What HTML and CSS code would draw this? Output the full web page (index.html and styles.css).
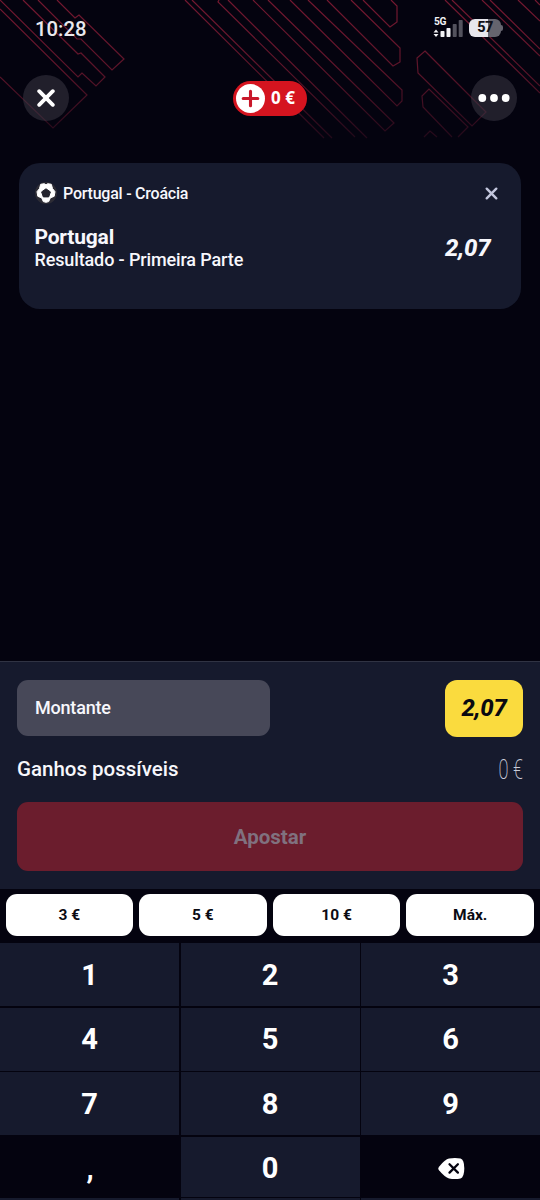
FILE: index.html
```html
<!DOCTYPE html>
<html lang="pt">
<head>
<meta charset="utf-8">
<title>Boletim</title>
<link rel="stylesheet" href="styles.css">
</head>
<body>
<div class="screen">
  <svg class="pattern" width="540" height="140" viewBox="0 0 540 140" fill="none">
    <defs>
      <linearGradient id="fade" gradientUnits="userSpaceOnUse" x1="0" y1="0" x2="0" y2="140">
        <stop offset="0" stop-color="#751830"/>
        <stop offset=".5" stop-color="#5c1429"/>
        <stop offset="1" stop-color="#22091a"/>
      </linearGradient>
    </defs>
    <g stroke="url(#fade)" stroke-width="1.2">
      <path d="M57 0L75 18L79 15L124 59L112 70L81 39L77 39L38 0"/>
      <path d="M23 0L78 54L81 53L105 77L96 86L82 73L78 77L0 0"/>
      <path d="M0 9L87 95L53 128L0 77"/>
      <path d="M185 0L324 138M192 0L332 138M219 0L218 2L355 137M228 0L367 138"/>
      <path d="M253 0L385 131L394 123L268 0"/>
      <path d="M290 0L397 106L402 101V90L308 0"/>
      <path d="M327 0L393 66L400 62V48L351 0"/>
      <path d="M363 0L390 27L397 22V6L391 0"/>
      <path d="M425 51L486 112L472 126L418 73L417 58Z"/>
      <path d="M452 137L423 107L422 96L429 89L468 127L458 137"/>
      <path d="M424 137L430 131L437 137"/>
      <path d="M445 0L540 93M452 0L540 86M482 0L540 56M490 0L540 49M518 0L540 21M535 0L540 5"/>
    </g>
  </svg>

  <header class="top">
    <div class="status">
      <span class="clock">10:28</span>
      <div class="status-right">
        <div class="signal">
          <span class="net">5G</span>
          <svg width="30" height="19" viewBox="0 0 30 19">
            <path d="M.5 13.500L3 10.500L5.500 13.500ZM.5 15L3 18L5.500 15Z" fill="#f2f2f5"/>
            <rect x="7.500" y="12" width="4" height="6" rx=".8" fill="#f2f2f5"/>
            <rect x="13.500" y="9" width="4" height="9" rx=".8" fill="#f2f2f5"/>
            <rect x="19.700" y="5" width="4" height="13" rx=".8" fill="#53525d"/>
            <rect x="25.700" y="1" width="4" height="17" rx=".8" fill="#53525d"/>
          </svg>
        </div>
        <div class="battery"><span class="cell">57</span><i class="tip"></i></div>
      </div>
    </div>
    <nav class="actions">
      <button class="round" aria-label="Fechar">
        <svg width="18" height="18" viewBox="0 0 18 18"><path d="M2.200 2.200L15.800 15.800M15.800 2.200L2.200 15.800" stroke="#fff" stroke-width="3.800" stroke-linecap="round"/></svg>
      </button>
      <button class="balance">
        <svg width="29" height="29" viewBox="0 0 29 29"><circle cx="14.500" cy="14.500" r="14.500" fill="#fff"/><path d="M14.500 7.200V21.800M7.200 14.500H21.800" stroke="#c9182a" stroke-width="3.100" stroke-linecap="round"/></svg>
        <span>0 €</span>
      </button>
      <button class="round" aria-label="Mais">
        <svg width="32" height="8" viewBox="0 0 32 8" fill="#fff"><circle cx="4.300" cy="4" r="3.900"/><circle cx="16" cy="4" r="3.900"/><circle cx="27.700" cy="4" r="3.900"/></svg>
      </button>
    </nav>
  </header>

  <main class="slip">
    <article class="bet">
      <div class="match">
        <svg width="22" height="22" viewBox="0 0 22 22"><circle cx="11" cy="11" r="11" fill="#2d2c35"/><path d="M5.700 2.300L9.300 1.700L11 2.900L12.700 1.700L16.300 2.300L17.500 6.500L20 9.700L19.200 14.300L15.300 15.900L13.700 19.600L11 20.300L8.300 19.600L6.700 15.900L2.800 14.300L2 9.700L4.500 6.500Z" fill="#fff" stroke="#fff" stroke-linejoin="round"/><path d="M11 6.800L15.400 9.900L13.700 14.900H8.300L6.600 9.900Z" fill="#25252f" stroke="#25252f" stroke-linejoin="round"/></svg>
        <span class="teams">Portugal - Croácia</span>
        <svg class="remove" width="13" height="13" viewBox="0 0 13 13"><path d="M1.700 1.700L11.300 11.300M11.300 1.700L1.700 11.300" stroke="#c3c6dd" stroke-width="2.400" stroke-linecap="round"/></svg>
      </div>
      <div class="pick">
        <div>
          <div class="selection">Portugal</div>
          <div class="market">Resultado - Primeira Parte</div>
        </div>
        <span class="odd">2,07</span>
      </div>
    </article>
  </main>

  <section class="stake">
    <div class="stake-row">
      <div class="amount">Montante</div>
      <div class="total">2,07</div>
    </div>
    <div class="gains"><span>Ganhos possíveis</span><span class="gain-value">0 €</span></div>
    <button class="place">Apostar</button>
  </section>

  <div class="quick">
    <button>3 €</button><button>5 €</button><button>10 €</button><button>Máx.</button>
  </div>

  <div class="keypad">
    <span>1</span><span>2</span><span>3</span>
    <span>4</span><span>5</span><span>6</span>
    <span>7</span><span>8</span><span>9</span>
    <span class="dark">,</span><span class="zero">0</span>
    <span class="dark">
      <svg width="27" height="21" viewBox="0 0 27 21"><path d="M1 8.700Q7 1.500 11 .6Q17-.4 22.500.6Q26.200 1.500 26.300 10.500Q26.200 19.500 22.500 20.400Q17 21.400 11 20.400Q7 19.500 1 12.300Q-.4 10.500 1 8.700Z" fill="#fff"/><path d="M11.500 6.200L19.900 14.600M19.900 6.200L11.500 14.600" stroke="#04030f" stroke-width="2.300" stroke-linecap="round"/></svg>
    </span>
    <i></i><i></i><i></i>
  </div>
</div>
</body>
</html>
```
FILE: styles.css
```css
* { box-sizing: border-box; }
body { margin: 0; background: #04030f; font-family: Roboto, sans-serif; color: #f7f7fc; }
button { border: 0; padding: 0; font-family: inherit; }
svg { display: block; }

.screen { position: relative; width: 540px; height: 1200px; overflow: hidden; display: flex; flex-direction: column; background: #04030f; }
.pattern { position: absolute; top: 0; left: 0; }
.top { position: relative; height: 163px; }

.status { height: 56px; padding: 1px 37px 0 35px; display: flex; align-items: center; justify-content: space-between; }
.clock { font-size: 20.300px; line-height: 24px; font-weight: 500; color: #e9e9ee; }
.status-right { display: flex; align-items: center; gap: 6px; margin-top: -2px; }
.signal { display: grid; width: 30px; height: 21px; }
.signal > * { grid-area: 1 / 1; }
.signal svg { align-self: end; }
.net { margin-left: 1px; font-size: 10.200px; line-height: 9px; font-weight: 700; letter-spacing: -.4px; color: #f2f2f5; }
.battery { display: flex; align-items: center; }
.cell { width: 32px; height: 18px; border-radius: 6px; background: linear-gradient(90deg, #e7e6ec 59%, #65646e 59%); color: #111018; font-size: 14.500px; line-height: 18px; font-weight: 800; letter-spacing: -.6px; text-align: center; }
.tip { width: 2px; height: 6px; background: #65646e; border-radius: 0 2px 2px 0; }

.actions { padding: 19px 23px 0; display: flex; align-items: center; justify-content: space-between; }
.round { width: 46px; height: 46px; border-radius: 50%; background: rgba(64, 62, 76, .48); display: grid; place-items: center; }
.balance { width: 74px; height: 35px; padding-left: 3px; border-radius: 18px; background: #d5141f; display: flex; align-items: center; gap: 6px; color: #fff; font: 700 17px/33px "Open Sans", sans-serif; white-space: nowrap; }
.balance span { margin-top: -1px; }

.slip { flex: 1; padding: 0 19px; }
.bet { height: 146px; padding: 19px 23.500px 0 16px; border-radius: 21px; background: #161a2d; }
.match { display: flex; align-items: center; height: 22px; }
.teams { margin-left: 6px; font-size: 16px; font-weight: 500; letter-spacing: -.23px; }
.remove { margin-left: auto; }
.pick { display: flex; justify-content: space-between; align-items: center; margin-top: 21px; padding-right: 7px; }
.pick > div { margin-left: -.5px; }
.selection { font-size: 21px; line-height: 24px; font-weight: 700; letter-spacing: -.2px; }
.market { font-size: 18px; line-height: 21px; font-weight: 500; letter-spacing: -.13px; }
.odd { font-size: 24px; font-style: italic; font-weight: 800; line-height: 28px; letter-spacing: -.2px; }

.stake { height: 228px; padding: 18px 17px 0; background: #161a2d; border-top: 1px solid #303343; }
.stake-row { display: flex; justify-content: space-between; height: 56px; }
.amount { width: 253px; height: 55.500px; padding-left: 18px; border-radius: 11px; background: #474858; font-size: 18px; line-height: 55px; font-weight: 500; letter-spacing: -.2px; }
.total { width: 78px; height: 56.500px; border-radius: 12px; background: #fadb3e; color: #090910; font-size: 24px; font-style: italic; font-weight: 800; line-height: 56px; letter-spacing: -.3px; text-align: center; }
.gains { display: flex; justify-content: space-between; align-items: center; height: 66px; font-size: 20.500px; font-weight: 500; }
.gain-value { font-size: 27.500px; font-weight: 200; color: #c9cbd8; transform: scaleX(.66); transform-origin: right; }
.place { display: block; width: 506px; height: 69px; border-radius: 11px; background: #6b1d2d; color: #80717f; font-size: 20.500px; font-weight: 700; }

.quick { height: 54px; padding: 5px 6px 0 5.500px; display: grid; grid-template-columns: repeat(4, 1fr); gap: 6px; }
.quick button { height: 42px; border-radius: 11px; background: #fff; color: #0b0b13; font-size: 15.500px; font-weight: 700; }

.keypad { height: 257px; display: grid; grid-template-columns: 179px 179px 1fr; grid-template-rows: 63px 63px 63px 60px 3px; gap: 1.500px; background: #04030f; }
.keypad > span { background: #161a2d; display: grid; place-items: center; font-size: 29px; line-height: 34px; font-weight: 700; color: #fff; }
.keypad > i { background: #161a2d; }
.keypad > .dark { background: #04030f; padding: 4px 0 0 1px; }
.keypad > .zero { padding-top: 3px; }
```
